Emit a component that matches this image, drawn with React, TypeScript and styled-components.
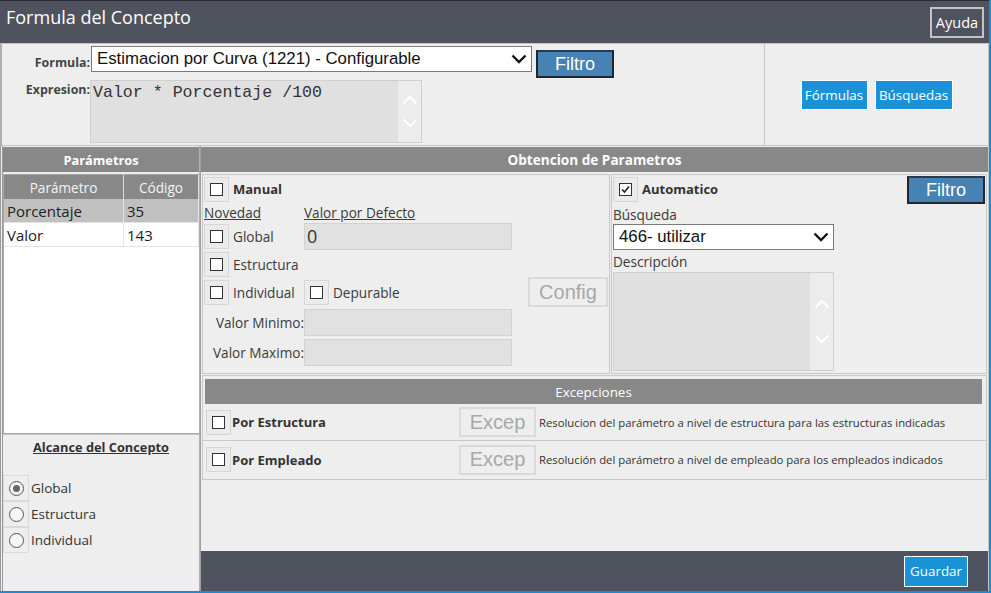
import React from "react";
import styled, { createGlobalStyle } from "styled-components";

const GlobalStyle = createGlobalStyle`
  html, body { margin: 0; padding: 0; background: #ffffff; }
  body { font-family: "Open Sans", "Noto Sans", sans-serif; }
  * { box-sizing: border-box; }
`;

const Window = styled.div`
  width: 991px;
  height: 593px;
  background: #eeeeee;
  border-right: 2px solid #1c8ad6;
  border-bottom: 2px solid #1c8ad6;
  display: flex;
  flex-direction: column;
  overflow: hidden;
  color: #333;
`;

const TitleBar = styled.header`
  height: 43px;
  flex: none;
  background: #4f535e;
  border-top: 1px solid #2b2d32;
  display: flex;
  align-items: flex-start;
  justify-content: space-between;
  padding: 3px 5px 0 6px;
`;

const Title = styled.h1`
  margin: 0;
  font-size: 18px;
  font-weight: 400;
  line-height: 27px;
  color: #ffffff;
`;

const HelpButton = styled.button`
  margin-top: 3px;
  width: 54px;
  height: 31px;
  background: transparent;
  border: 2px solid #c4c4c4;
  color: #ffffff;
  font-family: "Open Sans", sans-serif;
  font-size: 14.5px;
  padding: 0;
`;

const TopSection = styled.section`
  height: 103px;
  flex: none;
  display: flex;
  border: 1px solid #c4c4c4;
  border-left: 2px solid #b0b0b0;
`;

const FormulaArea = styled.div`
  flex: 1;
  display: grid;
  grid-template-columns: 88px auto 1fr;
  grid-template-rows: 32px 63px;
  row-gap: 2px;
  padding-top: 2px;
  align-items: start;
`;

const FieldLabel = styled.label<{ $pt: number }>`
  justify-self: end;
  padding-top: ${(p) => p.$pt}px;
  font-size: 12.4px;
  font-weight: 700;
  line-height: 16px;
  color: #444;
`;

const FieldSlot = styled.div`
  display: flex;
  align-items: flex-start;
  margin-left: 1px;
`;

const SelectBox = styled.div<{ $w: number }>`
  width: ${(p) => p.$w}px;
  height: 26px;
  background: #ffffff;
  border: 1px solid #7a7a7a;
  display: flex;
  align-items: center;
  justify-content: space-between;
  padding: 0 4px 0 5px;
  font-family: "Liberation Sans", Arial, sans-serif;
  font-size: 16.8px;
  color: #111;
  white-space: nowrap;
`;

const FilterButton = styled.button<{ $ml: number; $mt: number }>`
  margin-left: ${(p) => p.$ml}px;
  margin-top: ${(p) => p.$mt}px;
  width: 78px;
  height: 28px;
  background: #4682b4;
  border: 2px solid #1d2733;
  border-top-color: #2a3a4a;
  color: #ffffff;
  font-family: "Liberation Sans", Arial, sans-serif;
  font-size: 18px;
  padding: 0;
`;

const ExprBox = styled.div<{ $w: number; $h: number; $mono?: boolean }>`
  width: ${(p) => p.$w}px;
  height: ${(p) => p.$h}px;
  background: #e0e0e0;
  border: 1px solid #d0d0d0;
  display: flex;
  font-family: ${(p) => (p.$mono ? '"Liberation Mono", "Courier New", monospace' : "inherit")};
  font-size: 16.6px;
  color: #333;
`;

const ExprText = styled.div`
  flex: 1;
  padding: 2px 0 0 2px;
  line-height: 20px;
`;

const ScrollStrip = styled.div`
  width: 23px;
  background: #ececec;
  display: flex;
  flex-direction: column;
  justify-content: space-evenly;
  align-items: center;
`;

const LinkArea = styled.div`
  width: 224px;
  border-left: 1px solid #c4c4c4;
  display: flex;
  align-items: center;
  justify-content: center;
  gap: 7px;
`;

const BlueButton = styled.button<{ $w: number; $h?: number }>`
  width: ${(p) => p.$w}px;
  height: ${(p) => p.$h ?? 30}px;
  background: #1a93d6;
  border: 1px solid #ffffff;
  color: #ffffff;
  font-family: "Open Sans", sans-serif;
  font-size: 13.4px;
  padding: 0;
`;

const MainRow = styled.div`
  flex: 1;
  display: flex;
  min-height: 0;
`;

const LeftCol = styled.aside`
  width: 200px;
  flex: none;
  display: flex;
  flex-direction: column;
  border-left: 3px double #9a9a9a;
  border-right: 1px solid #b0b0b0;
  padding-top: 1px;
`;

const SectionHeader = styled.div<{ $size?: number }>`
  height: 25px;
  flex: none;
  background: #888888;
  color: #ffffff;
  font-size: ${(p) => p.$size ?? 12.8}px;
  font-weight: 700;
  display: flex;
  align-items: center;
  justify-content: center;
`;

const TableBox = styled.div`
  margin-top: 2px;
  height: 260px;
  flex: none;
  background: #ffffff;
  border: 1px solid #a8a8a8;
  border-right: none;
  display: grid;
  grid-template-columns: 120px 1fr;
  grid-auto-rows: 24px;
  align-content: start;
`;

const HeadCell = styled.div`
  height: 25px;
  background: #888888;
  color: #f4f4f4;
  font-size: 13.6px;
  display: flex;
  align-items: center;
  justify-content: center;
  border-right: 1px solid #dddddd;
`;

const Cell = styled.div<{ $selected?: boolean }>`
  background: ${(p) => (p.$selected ? "#c0c0c0" : "#ffffff")};
  color: #222;
  font-size: 15px;
  display: flex;
  align-items: center;
  padding-left: 3px;
  border-right: 1px solid #e4e4e4;
  border-bottom: 1px solid #e4e4e4;
`;

const ScopeSection = styled.div`
  flex: 1;
  border-top: 1px solid #c8c8c8;
  padding-top: 4px;
  display: flex;
  flex-direction: column;
`;

const ScopeTitle = styled.div`
  text-align: center;
  font-size: 12.8px;
  font-weight: 700;
  line-height: 16px;
  text-decoration: underline;
  color: #333;
  margin-bottom: 20px;
`;

const RadioRow = styled.div`
  display: flex;
  align-items: center;
  height: 26px;
  font-size: 13.5px;
  color: #333;
`;

const RadioCell = styled.span`
  width: 26px;
  height: 26px;
  border: 1px solid #dadada;
  display: grid;
  place-items: center;
  margin-right: 2px;
`;

const RadioDot = styled.span<{ $on?: boolean }>`
  width: 15px;
  height: 15px;
  border-radius: 50%;
  border: 1px solid #555;
  background: #f6f6f6;
  display: grid;
  place-items: center;
  &::after {
    content: "";
    width: 7px;
    height: 7px;
    border-radius: 50%;
    background: ${(p) => (p.$on ? "#666" : "transparent")};
  }
`;

const RightCol = styled.main`
  flex: 1;
  display: flex;
  flex-direction: column;
  border-left: 1px solid #a0a0a0;
  border-right: 1px solid #c4c4c4;
  padding-top: 1px;
`;

const RightBody = styled.div`
  flex: 1;
  padding: 2px 1px 0 1px;
  display: flex;
  flex-direction: column;
  gap: 1px;
`;

const Panels = styled.div`
  display: flex;
  gap: 1px;
  height: 200px;
`;

const GroupBox = styled.div<{ $w?: number }>`
  ${(p) => (p.$w ? `width: ${p.$w}px;` : "flex: 1;")}
  border: 1px solid #c8c8c8;
  padding: 1px;
  display: flex;
  flex-direction: column;
`;

const Row = styled.div<{ $h: number; $mt?: number }>`
  display: flex;
  align-items: center;
  height: ${(p) => p.$h}px;
  margin-top: ${(p) => p.$mt ?? 0}px;
  flex: none;
`;

const OptionCol = styled.div<{ $w: number }>`
  width: ${(p) => p.$w}px;
  display: flex;
  align-items: center;
  flex: none;
`;

const CheckCell = styled.span`
  width: 25px;
  height: 25px;
  flex: none;
  border: 1px solid #d6d6d6;
  background: #ebebeb;
  display: grid;
  place-items: center;
`;

const CheckBox = styled.span`
  width: 13px;
  height: 13px;
  border: 1px solid #333;
  background: #ffffff;
  display: grid;
  place-items: center;
`;

const OptText = styled.span<{ $bold?: boolean; $ml?: number }>`
  margin-left: ${(p) => p.$ml ?? 4}px;
  font-size: ${(p) => (p.$bold ? 13 : 13.6)}px;
  font-weight: ${(p) => (p.$bold ? 700 : 400)};
  color: ${(p) => (p.$bold ? "#333" : "#3a3a3a")};
  white-space: nowrap;
`;

const UText = styled.span<{ $w?: number }>`
  ${(p) => (p.$w ? `width: ${p.$w}px;` : "")}
  font-size: 13.6px;
  color: #3a3a3a;
  text-decoration: underline;
`;

const TextInput = styled.div`
  width: 208px;
  height: 27px;
  background: #e1e1e1;
  border: 1px solid #d2d2d2;
  font-size: 18px;
  line-height: 24px;
  padding-left: 2px;
  color: #333;
`;

const RightLabel = styled.span`
  width: 100px;
  text-align: right;
  font-size: 13.6px;
  color: #3a3a3a;
  flex: none;
  white-space: nowrap;
`;

const GhostButton = styled.button<{ $w: number; $ml?: string }>`
  width: ${(p) => p.$w}px;
  height: 30px;
  margin-left: ${(p) => p.$ml ?? "0"};
  background: #eeeeee;
  border: 2px solid #dadada;
  color: #a8a8a8;
  font-family: "Liberation Sans", Arial, sans-serif;
  font-size: 20px;
  padding: 0;
  flex: none;
`;

const AutoTop = styled.div`
  display: flex;
  justify-content: space-between;
  align-items: flex-start;
  height: 28px;
`;

const SmallLabel = styled.div<{ $h: number }>`
  height: ${(p) => p.$h}px;
  font-size: 13.6px;
  line-height: ${(p) => p.$h + 2}px;
  color: #3a3a3a;
`;

const ExcBox = styled.div`
  border: 1px solid #c8c8c8;
  height: 105px;
  display: flex;
  flex-direction: column;
`;

const ExcHeader = styled.div`
  margin: 3px 4px 0 2px;
  height: 25px;
  background: #888888;
  color: #ffffff;
  font-size: 13.4px;
  display: flex;
  align-items: center;
  justify-content: center;
`;

const ExcRow = styled.div<{ $last?: boolean }>`
  height: 37px;
  display: flex;
  align-items: center;
  padding-left: 3px;
  border-bottom: ${(p) => (p.$last ? "none" : "1px solid #c8c8c8")};
`;

const ExcLabel = styled.span`
  width: 228px;
  font-size: 13px;
  font-weight: 700;
  color: #333;
  padding-left: 1px;
`;

const ExcDesc = styled.span`
  margin-left: 3px;
  font-size: 11.3px;
  color: #333;
  white-space: nowrap;
`;

const Footer = styled.footer`
  height: 40px;
  flex: none;
  background: #4f535e;
  display: flex;
  align-items: center;
  justify-content: flex-end;
  padding-right: 20px;
`;

const Chevron = ({ color = "#111", sw = 2.4 }: { color?: string; sw?: number }) => (
  <svg width="16" height="10" viewBox="0 0 16 10">
    <polyline points="1.5,1.5 8,8 14.5,1.5" fill="none" stroke={color} strokeWidth={sw} />
  </svg>
);

const ChevronUp = () => (
  <svg width="16" height="10" viewBox="0 0 16 10">
    <polyline points="1.5,8.5 8,2 14.5,8.5" fill="none" stroke="#ffffff" strokeWidth="2" />
  </svg>
);

const Check = ({ checked }: { checked?: boolean }) => (
  <CheckCell>
    <CheckBox>
      {checked && (
        <svg width="11" height="11" viewBox="0 0 11 11">
          <polyline points="2,5.5 4.5,8 9,2.5" fill="none" stroke="#222" strokeWidth="1.6" />
        </svg>
      )}
    </CheckBox>
  </CheckCell>
);

const Scroll = () => (
  <ScrollStrip>
    <ChevronUp />
    <Chevron color="#ffffff" sw={2} />
  </ScrollStrip>
);

const params = [
  { name: "Porcentaje", code: "35", selected: true },
  { name: "Valor", code: "143" },
];

export default function App() {
  return (
    <>
      <GlobalStyle />
      <Window>
        <TitleBar>
          <Title>Formula del Concepto</Title>
          <HelpButton>Ayuda</HelpButton>
        </TitleBar>

        <TopSection>
          <FormulaArea>
            <FieldLabel $pt={9}>Formula:</FieldLabel>
            <FieldSlot>
              <SelectBox $w={441}>
                <span>Estimacion por Curva (1221) - Configurable</span>
                <Chevron />
              </SelectBox>
              <FilterButton $ml={4} $mt={4}>Filtro</FilterButton>
            </FieldSlot>
            <span />
            <FieldLabel $pt={2}>Expresion:</FieldLabel>
            <ExprBox $w={332} $h={63} $mono>
              <ExprText>Valor * Porcentaje /100</ExprText>
              <Scroll />
            </ExprBox>
            <span />
          </FormulaArea>
          <LinkArea>
            <BlueButton $w={67}>Fórmulas</BlueButton>
            <BlueButton $w={78}>Búsquedas</BlueButton>
          </LinkArea>
        </TopSection>

        <MainRow>
          <LeftCol>
            <SectionHeader>Parámetros</SectionHeader>
            <TableBox>
              <HeadCell>Parámetro</HeadCell>
              <HeadCell>Código</HeadCell>
              {params.map((p) => (
                <React.Fragment key={p.code}>
                  <Cell $selected={p.selected}>{p.name}</Cell>
                  <Cell $selected={p.selected}>{p.code}</Cell>
                </React.Fragment>
              ))}
            </TableBox>
            <ScopeSection>
              <ScopeTitle>Alcance del Concepto</ScopeTitle>
              {["Global", "Estructura", "Individual"].map((s, i) => (
                <RadioRow key={s}>
                  <RadioCell>
                    <RadioDot $on={i === 0} />
                  </RadioCell>
                  {s}
                </RadioRow>
              ))}
            </ScopeSection>
          </LeftCol>

          <RightCol>
            <SectionHeader $size={13.6}>Obtencion de Parametros</SectionHeader>
            <RightBody>
              <Panels>
                <GroupBox $w={408}>
                  <Row $h={26}>
                    <Check />
                    <OptText $bold>Manual</OptText>
                  </Row>
                  <Row $h={20}>
                    <UText $w={100}>Novedad</UText>
                    <UText>Valor por Defecto</UText>
                  </Row>
                  <Row $h={28}>
                    <OptionCol $w={100}>
                      <Check />
                      <OptText>Global</OptText>
                    </OptionCol>
                    <TextInput>0</TextInput>
                  </Row>
                  <Row $h={28}>
                    <OptionCol $w={100}>
                      <Check />
                      <OptText>Estructura</OptText>
                    </OptionCol>
                  </Row>
                  <Row $h={28}>
                    <OptionCol $w={100}>
                      <Check />
                      <OptText>Individual</OptText>
                    </OptionCol>
                    <Check />
                    <OptText>Depurable</OptText>
                    <GhostButton $w={80} $ml="auto">Config</GhostButton>
                  </Row>
                  <Row $h={28} $mt={2}>
                    <RightLabel>Valor Minimo:</RightLabel>
                    <TextInput />
                  </Row>
                  <Row $h={28} $mt={2}>
                    <RightLabel>Valor Maximo:</RightLabel>
                    <TextInput />
                  </Row>
                </GroupBox>

                <GroupBox>
                  <AutoTop>
                    <Row $h={26}>
                      <Check checked />
                      <OptText $bold>Automatico</OptText>
                    </Row>
                    <FilterButton $ml={0} $mt={0}>Filtro</FilterButton>
                  </AutoTop>
                  <SmallLabel $h={20}>Búsqueda</SmallLabel>
                  <SelectBox $w={221}>
                    <span>466- utilizar</span>
                    <Chevron />
                  </SelectBox>
                  <SmallLabel $h={22}>Descripción</SmallLabel>
                  <ExprBox $w={221} $h={99}>
                    <ExprText />
                    <Scroll />
                  </ExprBox>
                </GroupBox>
              </Panels>

              <ExcBox>
                <ExcHeader>Excepciones</ExcHeader>
                <ExcRow>
                  <Check />
                  <ExcLabel>Por Estructura</ExcLabel>
                  <GhostButton $w={77}>Excep</GhostButton>
                  <ExcDesc>Resolucion del parámetro a nivel de estructura para las estructuras indicadas</ExcDesc>
                </ExcRow>
                <ExcRow $last>
                  <Check />
                  <ExcLabel>Por Empleado</ExcLabel>
                  <GhostButton $w={77}>Excep</GhostButton>
                  <ExcDesc>Resolución del parámetro a nivel de empleado para los empleados indicados</ExcDesc>
                </ExcRow>
              </ExcBox>
            </RightBody>
            <Footer>
              <BlueButton $w={64} $h={31}>Guardar</BlueButton>
            </Footer>
          </RightCol>
        </MainRow>
      </Window>
    </>
  );
}
